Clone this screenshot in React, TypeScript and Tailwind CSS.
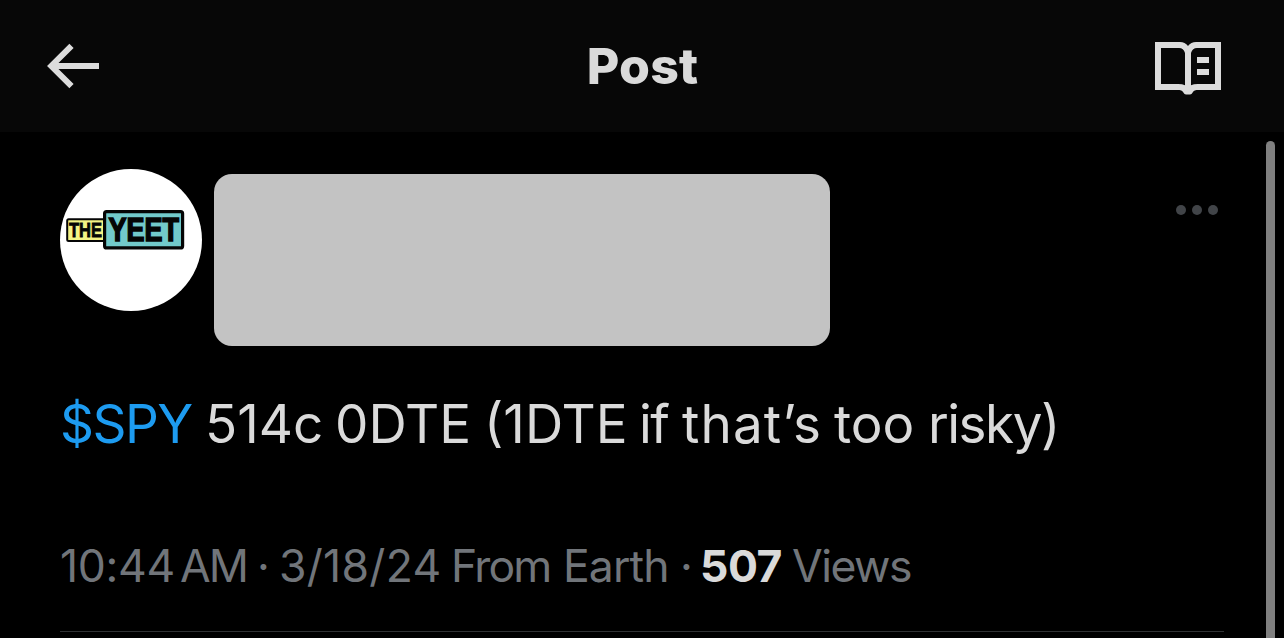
import React from "react";

function BackArrow() {
  return (
    <svg width="54" height="46" viewBox="46 43 54 46" fill="none" stroke="#dcdcdc" strokeWidth="6" role="img" aria-label="Back">
      <path d="M71.500 45.800 51.300 66 71.500 86.200M52 66H99" />
    </svg>
  );
}

function ReaderIcon() {
  return (
    <svg width="66" height="54" viewBox="1155 42 66 54" role="img" aria-label="Reader">
      <path
        fill="#dcdcdc"
        fillRule="evenodd"
        d="M1155 42h25q5 0 8 4 3-4 8-4h25v48h-22c-4 0-5 .5-6 2q-1.500 2.500-3 2.500h-4q-1.500 0-3-2.500c-1-1.500-2-2-6-2h-22zM1161 48v36h17q4.500 0 7 1.200V53q-1.500-5-6-5zM1215 48v36h-17q-4.500 0-7 1.200V53q1.500-5 6-5z"
      />
      <path fill="#dcdcdc" d="M1197 57h12v6h-12zM1197 69h12v6h-12z" />
    </svg>
  );
}

function Avatar() {
  return (
    <div className="h-[142px] w-[142px] shrink-0 rounded-full bg-white">
      <svg width="142" height="142" viewBox="60 169 142 142" className="overflow-visible" role="img" aria-label="The Yeet">
        <rect x="67.200" y="219.200" width="40" height="21.800" rx="1.500" fill="#f3f384" stroke="#050505" strokeWidth="2" />
        <rect x="104.600" y="211.600" width="78" height="36.300" rx="2" fill="#72cacb" stroke="#050505" strokeWidth="3.200" />
        <g fill="#050505" stroke="#050505" className="font-['Liberation_Sans',sans-serif] font-bold">
          <text x="69" y="236.800" fontSize="20.500" strokeWidth="0.800" textLength="33" lengthAdjust="spacingAndGlyphs">THE</text>
          <text x="108.500" y="241.200" fontSize="34" strokeWidth="1.600" textLength="70.500" lengthAdjust="spacingAndGlyphs">YEET</text>
        </g>
      </svg>
    </div>
  );
}

export default function App() {
  return (
    <div className="relative flex h-[638px] w-[1284px] flex-col overflow-hidden bg-black font-['Inter',sans-serif] text-[#dadada]">
      <header className="flex h-[132px] shrink-0 items-start justify-between bg-[#070707] pl-[46px] pr-[63px]">
        <div className="w-[66px] pt-[43px]">
          <BackArrow />
        </div>
        <h1 className="mr-[-18px] pt-[36px] text-[50px] leading-[60px] font-extrabold tracking-[0.2px]">Post</h1>
        <div className="pt-[42px]">
          <ReaderIcon />
        </div>
      </header>

      <main className="flex flex-col pl-[60px]">
        <section className="flex h-[214px] items-start pt-[37px]">
          <Avatar />
          <div className="mt-[5px] ml-[12px] h-[172px] w-[616px] rounded-[18px] bg-[#c3c3c3]" />
          <div className="mt-[36px] ml-[346px] flex gap-[6.500px]">
            <span className="h-[9.500px] w-[9.500px] rounded-full bg-[#414448]" />
            <span className="h-[9.500px] w-[9.500px] rounded-full bg-[#414448]" />
            <span className="h-[9.500px] w-[9.500px] rounded-full bg-[#414448]" />
          </div>
        </section>

        <p className="mt-[48px] flex h-[60px] text-[53px] leading-[60px] whitespace-nowrap">
          <span className="w-[145px] tracking-[-1.5px] text-[#1d9bf0]">$SPY</span>
          <span className="w-[130px]">514c</span>
          <span className="w-[149px]">0DTE</span>
          <span className="w-[155px]">(1DTE</span>
          <span className="w-[43px] tracking-[-1.5px]">if</span>
          <span className="w-[152px] tracking-[1.1px]">that’s</span>
          <span className="w-[94px]">too</span>
          <span className="tracking-[-1.5px]">risky)</span>
        </p>

        <p className="mt-[82px] flex h-[60px] text-[44.500px] leading-[60px] whitespace-nowrap text-[#71757a]">
          <span className="w-[120px] tracking-[-0.3px]">10:44</span>
          <span className="w-[77px] tracking-[-2px]">AM</span>
          <span className="w-[22px]">·</span>
          <span className="w-[172px] tracking-[0.3px]">3/18/24</span>
          <span className="w-[112px] tracking-[-1.8px]">From</span>
          <span className="w-[117px] tracking-[-0.9px]">Earth</span>
          <span className="w-[20px]">·</span>
          <span className="w-[92px] tracking-[-0.5px] font-bold text-[#dadada]">507</span>
          <span className="tracking-[-1.5px]">Views</span>
        </p>

        <div className="mt-[35px] h-px w-[1164px] bg-[#303234]" />
      </main>

      <div className="absolute top-[141px] right-[9px] bottom-0 w-[9px] rounded-t-full bg-[#808080]" />
    </div>
  );
}
